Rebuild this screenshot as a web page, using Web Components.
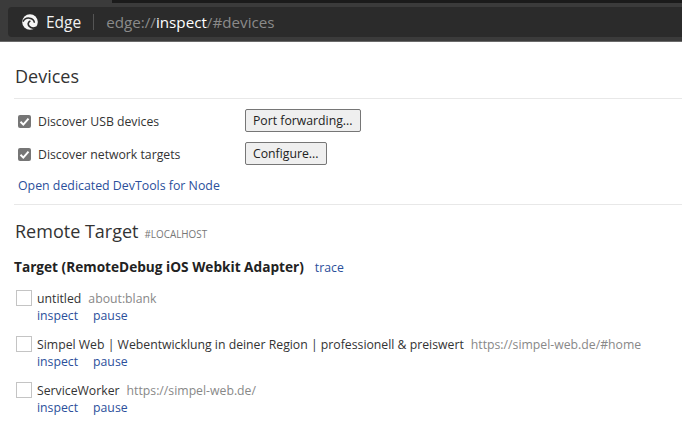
<!DOCTYPE html>
<html>
<head>
<meta charset="utf-8">
<style>
  html, body { margin: 0; padding: 0; background: #fff; overflow: hidden; }
  body { font-family: "Open Sans", "Noto Sans", "Liberation Sans", sans-serif; font-size: 12.25px; color: #333; }
</style>
</head>
<body>
<browser-bar></browser-bar>
<page-section title="Devices">
  <option-row label="Discover USB devices" button="Port forwarding..."></option-row>
  <option-row label="Discover network targets" button="Configure..." style="margin-top:10px"></option-row>
  <node-link>Open dedicated DevTools for Node</node-link>
</page-section>
<remote-section title="Remote Target" tag="#LOCALHOST" target="Target (RemoteDebug iOS Webkit Adapter)">
  <target-item name="untitled" url="about:blank"></target-item>
  <target-item name="Simpel Web | Webentwicklung in deiner Region | professionell &amp; preiswert" url="https://simpel-web.de/#home"></target-item>
  <target-item name="ServiceWorker" url="https://simpel-web.de/"></target-item>
</remote-section>

<script>
// top browser chrome with the address bar
class BrowserBar extends HTMLElement {
  constructor() {
    super();
    this.attachShadow({ mode: 'open' });
    this.shadowRoot.innerHTML = `
    <style>
      :host { display: block; height: 42px; box-sizing: border-box; background: #3b3b3b; border-bottom: 1px solid #6a6a6a; }
      .top { height: 3px; margin-left: 112px; background: #1b1b1b; }
      .bar { height: 30px; margin: 4px 0 0 8px; background: #2b2b2b; border-radius: 4px 0 0 4px;
             display: flex; align-items: center; padding-left: 14px; }
      svg { width: 16px; height: 16px; flex: none; }
      .edge { color: #f2f2f2; font-size: 15.5px; margin-left: 8px; }
      .sep { width: 1px; height: 16px; background: #555; margin: 0 12px 0 12px; }
      .url { color: #8a8a8a; font-size: 15.2px; }
      .url b { color: #fff; font-weight: 400; }
    </style>
    <div class="top"></div>
    <div class="bar">
      <svg viewBox="0 0 16 16">
        <circle cx="8" cy="8" r="7.8" fill="#f6f6f6"/>
        <path d="M1 7.6C2.4 4.9 5 3.8 7.6 4.2c2.6.4 4.6 2.2 4.8 4.6" fill="none" stroke="#2b2b2b" stroke-width="1.5"/>
        <path d="M8.4 7C6.2 7.8 5.6 10.2 7 12c1.5 1.9 4.6 2.5 7.4 1.2" fill="none" stroke="#2b2b2b" stroke-width="1.7"/>
      </svg>
      <span class="edge">Edge</span><span class="sep"></span><span class="url">edge://<b>inspect</b>/#devices</span>
    </div>`;
  }
}

// "Devices" block at the top of the page
class PageSection extends HTMLElement {
  constructor() {
    super();
    this.attachShadow({ mode: 'open' });
  }
  connectedCallback() {
    this.shadowRoot.innerHTML = `
    <style>
      :host { display: block; margin-left: 14px; height: 163px; box-sizing: border-box; border-bottom: 1px solid #e8e8e8; }
      h2 { margin: 0; height: 57px; box-sizing: border-box; padding: 21px 0 0 1px; font-size: 18px; line-height: 26px; font-weight: 400; color: #333;
           border-bottom: 1px solid #e8e8e8; }
      .body { padding: 10px 0 0 4px; }
    </style>
    <h2>${this.getAttribute('title')}</h2>
    <div class="body"><slot></slot></div>`;
  }
}

class OptionRow extends HTMLElement {
  constructor() {
    super();
    this.attachShadow({ mode: 'open' });
  }
  connectedCallback() {
    this.shadowRoot.innerHTML = `
    <style>
      :host { display: flex; align-items: center; height: 23px; }
      .box { width: 13px; height: 13px; border-radius: 2px; background: #767676; flex: none; margin-top: 1px; }
      svg { display: block; width: 13px; height: 13px; }
      label { width: 207px; margin-left: 7px; padding-top: 2px; color: #333; }
      button { height: 23px; box-sizing: border-box; padding: 0 7px; border: 1px solid #767676; border-radius: 2px; background: #efefef;
               font: inherit; color: #222; }
    </style>
    <span class="box"><svg viewBox="0 0 13 13"><path d="M2.5 6.8l2.8 2.8 5.2-6" fill="none" stroke="#fff" stroke-width="2"/></svg></span>
    <label>${this.getAttribute('label')}</label>
    <button>${this.getAttribute('button')}</button>`;
  }
}

class NodeLink extends HTMLElement {
  constructor() {
    super();
    this.attachShadow({ mode: 'open' });
    this.shadowRoot.innerHTML = `
    <style>
      :host { display: block; margin-top: 12px; color: #2b4f9b; font-size: 12.35px; line-height: 17px; }
    </style>
    <slot></slot>`;
  }
}

// "Remote Target" block with the list of targets
class RemoteSection extends HTMLElement {
  constructor() {
    super();
    this.attachShadow({ mode: 'open' });
  }
  connectedCallback() {
    this.shadowRoot.innerHTML = `
    <style>
      :host { display: block; padding: 13px 0 0 15px; }
      h2 { margin: 0; font-size: 18px; line-height: 27px; font-weight: 400; color: #333; display: flex; align-items: baseline; }
      h2 small { margin-left: 6px; font-size: 9.9px; color: #777; }
      h3 { margin: 10px 0 0 -1px; font-size: 13.65px; line-height: 17px; font-weight: 700; color: #222; display: flex; align-items: baseline; }
      h3 a { margin-left: 11px; font-size: 12.25px; font-weight: 400; color: #2b4f9b; }
      .list { margin: 14px 0 0 1px; }
    </style>
    <h2>${this.getAttribute('title')}<small>${this.getAttribute('tag')}</small></h2>
    <h3>${this.getAttribute('target')}<a>trace</a></h3>
    <div class="list"><slot></slot></div>`;
  }
}

class TargetItem extends HTMLElement {
  constructor() {
    super();
    this.attachShadow({ mode: 'open' });
  }
  connectedCallback() {
    this.shadowRoot.innerHTML = `
    <style>
      :host { display: flex; height: 46px; line-height: 17px; }
      .thumb { width: 14px; height: 14px; border: 1px solid #c4c4c4; flex: none; margin: 0 5px 0 0; }
      .name { color: #333; }
      .url { color: #888; margin-left: 7px; }
      .actions { color: #2b4f9b; display: flex; gap: 15px; }
    </style>
    <span class="thumb"></span>
    <div>
      <div><span class="name">${this.getAttribute('name').replace('&', '&amp;')}</span><span class="url">${this.getAttribute('url')}</span></div>
      <div class="actions"><span>inspect</span><span>pause</span></div>
    </div>`;
  }
}

customElements.define('browser-bar', BrowserBar);
customElements.define('page-section', PageSection);
customElements.define('option-row', OptionRow);
customElements.define('node-link', NodeLink);
customElements.define('remote-section', RemoteSection);
customElements.define('target-item', TargetItem);
</script>
</body>
</html>
